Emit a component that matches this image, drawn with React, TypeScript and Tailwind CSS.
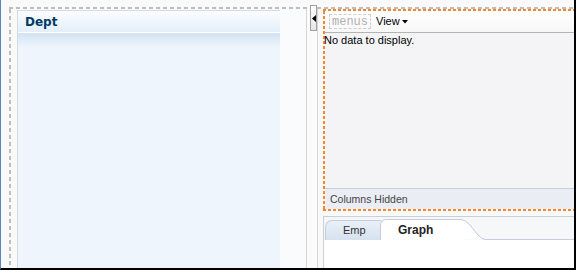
import React from 'react';

const sans = { fontFamily: '"Liberation Sans", Arial, sans-serif' };

function DeptPanel() {
  return (
    <div className="w-[263px] mt-px flex flex-col border-l border-t border-[#d3dce8] bg-[#eef5fc]">
      {/* header */}
      <div className="h-[21px] bg-gradient-to-b from-[#fbfdff] to-[#e4eef9] pl-[7px] flex items-center">
        <span
          className="text-[12px] font-bold text-[#003a66] leading-none"
          style={{ fontFamily: '"DejaVu Sans", Verdana, sans-serif' }}
        >
          Dept
        </span>
      </div>
      <div className="h-px bg-white" />
      <div className="h-[14px] bg-gradient-to-b from-[#d2e3f4] to-[#eef5fc]" />
      <div className="flex-1" />
    </div>
  );
}

function Splitter() {
  return (
    <div className="flex">
      <div className="w-px bg-[#d6d6d6]" />
      <div className="w-[10px] bg-[#fbfbfb] flex justify-end">
        <div className="w-[7px] h-[26px] -mt-[4px] border border-[#a0a0a0] bg-gradient-to-b from-white to-[#e6e6e6] flex items-center justify-center">
          <svg width="4" height="7" viewBox="0 0 4 7">
            <path d="M4 0 L0 3.5 L4 7 Z" fill="#000" />
          </svg>
        </div>
      </div>
      <div className="w-px bg-[#d6d6d6]" />
    </div>
  );
}

function Toolbar() {
  return (
    <div className="h-[22px] flex items-center border-b border-[#b4b4b4] bg-gradient-to-b from-white to-[#f7f7f7] pl-[4px]">
      <div className="h-[15px] px-[2px] flex items-center border border-dashed border-[#cfcfcf]">
        <span
          className="text-[12px] leading-none text-[#b0b0b0]"
          style={{ fontFamily: '"Liberation Mono", "Courier New", monospace' }}
        >
          menus
        </span>
      </div>
      <div className="ml-[5px] flex items-center gap-[2px]">
        <span className="text-[11px] leading-none text-black">View</span>
        <svg width="6" height="4" viewBox="0 0 6 4">
          <path d="M0 0 H6 L3 3.5 Z" fill="#000" />
        </svg>
      </div>
    </div>
  );
}

function Tabs() {
  return (
    <div className="flex-1 flex flex-col border-l border-t border-[#c9d0dc] bg-white">
      <div className="h-[23px] flex items-end bg-[#f6f7f9]">
        <div className="flex items-end h-[20px] w-full">
          <div className="ml-px w-[56px] h-[20px] rounded-tl-[7px] border-t border-l border-[#c4cedd] bg-gradient-to-b from-[#e9f0f8] to-[#d6e2ef] flex items-center pl-[17px]">
            <span className="text-[11px] text-[#333] leading-none">Emp</span>
          </div>
          <div className="w-[82px] h-[21px] -ml-[1px] rounded-tl-[6px] border-t border-l border-[#c4cedd] bg-white flex items-center pl-[17px]">
            <span className="text-[12px] font-bold text-[#222] leading-none">Graph</span>
          </div>
          <svg width="24" height="21" viewBox="0 0 24 21" className="-ml-[1px]">
            <path d="M0 0.5 Q4 0.5 8 5 L17 16 Q21 20.5 24 20.5 L0 20.5 Z" fill="#fff" />
            <path d="M0 0.5 Q4 0.5 8 5 L17 16 Q21 20.5 24 20.5" fill="none" stroke="#c4cedd" />
          </svg>
          <div className="flex-1 h-[20px] border-b border-[#c4cedd]" />
        </div>
      </div>
      <div className="flex-1 bg-white" />
    </div>
  );
}

function DataPanel() {
  return (
    <div className="h-[202px] flex flex-col">
      <div className="h-[2px] bg-[repeating-linear-gradient(90deg,#f7862d_0_3px,transparent_3px_5px)]" />
      <div className="flex-1 min-h-0 flex">
        <div className="w-[2px] bg-[repeating-linear-gradient(180deg,#f7862d_0_3px,transparent_3px_5px)]" />
        <div className="flex-1 flex flex-col">
          <Toolbar />
          <div className="flex-1 bg-[#f4f4f6] pt-px">
            <div className="text-[11px] leading-[13px] text-black -ml-px">No data to display.</div>
          </div>
          <div className="h-[21px] border-t border-[#c9cfdd] bg-[#ebedf4] flex items-center pl-[5px]">
            <span className="text-[10.5px] text-[#444] leading-none">Columns Hidden</span>
          </div>
        </div>
      </div>
      <div className="h-[2px] bg-[repeating-linear-gradient(90deg,#f7862d_0_3px,transparent_3px_5px)]" />
    </div>
  );
}

export default function App() {
  return (
    <div
      className="w-[576px] h-[270px] overflow-hidden flex flex-col pl-[8px] pt-[7px] bg-[#f9f9f9] border-l border-l-[#5a86c0] border-r-2 border-b-2 border-r-black border-b-black"
      style={sans}
    >
      <div className="h-[2px] bg-[repeating-linear-gradient(90deg,#bdbdbd_0_4px,transparent_4px_7px)]" />
      <div className="flex-1 min-h-0 flex">
        <div className="w-[2px] bg-[repeating-linear-gradient(180deg,#bdbdbd_0_4px,transparent_4px_7px)]" />
        <div className="pl-[6px] flex">
          <DeptPanel />
        </div>
        <div className="w-[26px] bg-[#fafbfc]" />
        <Splitter />
        <div className="w-[5px]" />
        <div className="flex-1 flex flex-col">
          <DataPanel />
          <div className="h-[5px]" />
          <Tabs />
        </div>
      </div>
    </div>
  );
}
